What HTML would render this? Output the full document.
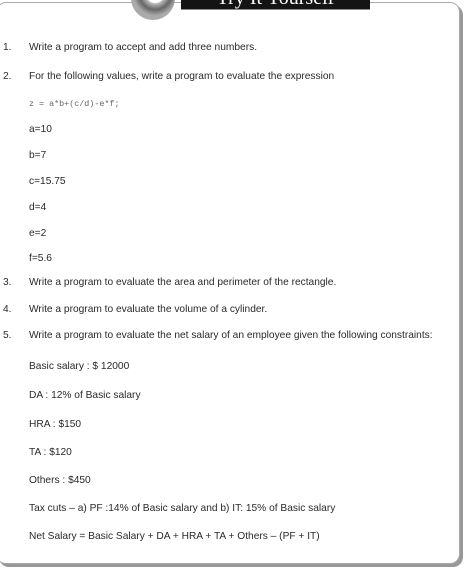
<!DOCTYPE html>
<html><head><style>
body{margin:0;width:467px;height:569px;background:#fff;position:relative;overflow:hidden;font-family:"Liberation Sans",Arial,sans-serif;font-size:10.2px;color:#2a2a2a}
.box{position:absolute;left:-4px;top:2px;width:462px;height:560px;border:1.5px solid #aaa;border-radius:10px;box-shadow:3px 3px 0 #999;background:#fff}
.hdr{position:absolute;left:181px;top:0;width:189px;height:9px;background:#141414;overflow:hidden;border-bottom:1px solid #888}
.hdr span{position:absolute;left:0;right:0;top:-13px;text-align:center;color:#fff;font-family:"Liberation Serif",serif;font-size:20px}
.circ{position:absolute;left:131px;top:-24px;width:44px;height:44px;border-radius:50%;background:radial-gradient(circle at 55% 40%,#fff 0 9px,#bbb 10px,#666 16px,#aaa 22px)}
.l{position:absolute;left:29px;white-space:nowrap;line-height:12px}
.n{position:absolute;left:3px;line-height:12px}
.m{font-family:"Liberation Mono",monospace;font-size:8.4px;color:#666}
</style></head><body>
<div class="box"></div>
<div class="circ"></div>
<div class="hdr"><span>Try It Yourself</span></div>
<div class="n" style="top:42px">1.</div><div class="l" style="top:42px">Write a program to accept and add three numbers.</div>
<div class="n" style="top:71px">2.</div><div class="l" style="top:71px">For the following values, write a program to evaluate the expression</div>
<div class="l m" style="top:98px">z = a*b+(c/d)-e*f;</div>
<div class="l" style="top:124px">a=10</div>
<div class="l" style="top:150px">b=7</div>
<div class="l" style="top:176px">c=15.75</div>
<div class="l" style="top:202px">d=4</div>
<div class="l" style="top:228px">e=2</div>
<div class="l" style="top:253px">f=5.6</div>
<div class="n" style="top:277px">3.</div><div class="l" style="top:277px">Write a program to evaluate the area and perimeter of the rectangle.</div>
<div class="n" style="top:304px">4.</div><div class="l" style="top:304px">Write a program to evaluate the volume of a cylinder.</div>
<div class="n" style="top:330px">5.</div><div class="l" style="top:330px">Write a program to evaluate the net salary of an employee given the following constraints:</div>
<div class="l" style="top:361px">Basic salary : $ 12000</div>
<div class="l" style="top:390px">DA : 12% of Basic salary</div>
<div class="l" style="top:419px">HRA : $150</div>
<div class="l" style="top:447px">TA : $120</div>
<div class="l" style="top:475px">Others : $450</div>
<div class="l" style="top:503px">Tax cuts – a) PF :14% of Basic salary and b) IT: 15% of Basic salary</div>
<div class="l" style="top:531px">Net Salary = Basic Salary + DA + HRA + TA + Others – (PF + IT)</div>
</body></html>
